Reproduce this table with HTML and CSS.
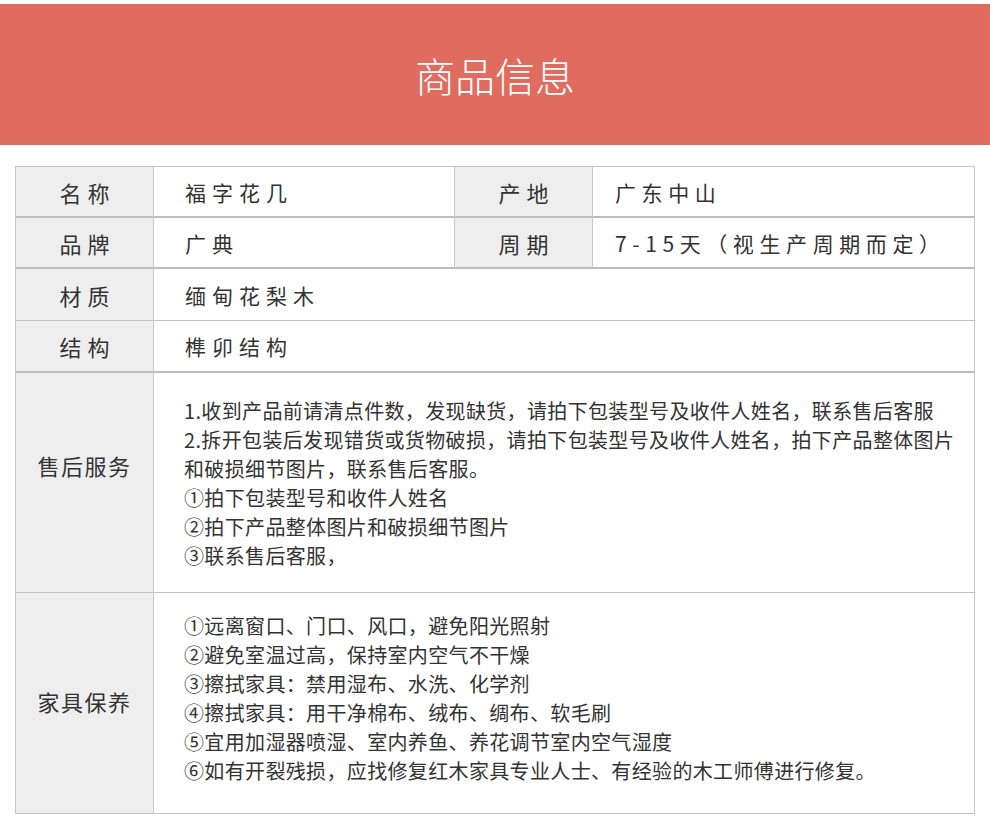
FILE: index.html
```html
<!DOCTYPE html>
<html lang="zh-CN">
<head>
<meta charset="utf-8">
<title>商品信息</title>
<link rel="stylesheet" href="styles.css">
</head>
<body>
<header class="banner"><h1 class="banner-title">商品信息</h1></header>
<section class="info">
  <div class="cell label short thick">名称</div>
  <div class="cell value short thick">福字花几</div>
  <div class="cell label short thick">产地</div>
  <div class="cell value value-right short thick">广东中山</div>

  <div class="cell label short thick">品牌</div>
  <div class="cell value short thick">广典</div>
  <div class="cell label short thick">周期</div>
  <div class="cell value value-right short thick">7-15天（视生产周期而定）</div>

  <div class="cell label short">材质</div>
  <div class="cell value span short">缅甸花梨木</div>

  <div class="cell label short thick">结构</div>
  <div class="cell value span short thick">榫卯结构</div>

  <div class="cell label long raised">售后服务</div>
  <div class="cell text span">
    <div class="lines">
      <p>1.收到产品前请清点件数，发现缺货，请拍下包装型号及收件人姓名，联系售后客服</p>
      <p>2.拆开包装后发现错货或货物破损，请拍下包装型号及收件人姓名，拍下产品整体图片<br>和破损细节图片，联系售后客服。</p>
      <p>①拍下包装型号和收件人姓名</p>
      <p>②拍下产品整体图片和破损细节图片</p>
      <p>③联系售后客服，</p>
    </div>
  </div>

  <div class="cell label long lifted">家具保养</div>
  <div class="cell text span text-lifted">
    <div class="lines">
      <p>①远离窗口、门口、风口，避免阳光照射</p>
      <p>②避免室温过高，保持室内空气不干燥</p>
      <p>③擦拭家具：禁用湿布、水洗、化学剂</p>
      <p>④擦拭家具：用干净棉布、绒布、绸布、软毛刷</p>
      <p>⑤宜用加湿器喷湿、室内养鱼、养花调节室内空气湿度</p>
      <p>⑥如有开裂残损，应找修复红木家具专业人士、有经验的木工师傅进行修复。</p>
    </div>
  </div>
</section>
</body>
</html>
```

FILE: styles.css
```css
html, body {
  margin: 0;
  padding: 0;
  background: #ffffff;
}

body {
  font-family: "Noto Sans CJK SC", "Noto Sans", sans-serif;
  color: #333333;
}

.banner {
  margin-top: 4px;
  height: 141px;
  background: #e06b5f;
  display: flex;
  align-items: center;
  justify-content: center;
}

.banner-title {
  margin: 0;
  font-size: 40px;
  font-weight: 300;
  color: #ffffff;
  line-height: 1;
}

.info {
  margin: 21px 0 0 15px;
  width: 960px;
  box-sizing: border-box;
  display: grid;
  grid-template-columns: 138px 301px 138px 1fr;
  grid-template-rows: 51px 51px 52px 52px 220px 221px;
  border-left: 1px solid #c6c6c6;
  border-top: 1px solid #c6c6c6;
}

.cell {
  box-sizing: border-box;
  border-right: 1px solid #c8c8c8;
  border-bottom: 1px solid #c2c2c2;
  display: flex;
  align-items: center;
}

.cell.thick {
  border-bottom: 2px solid #bdbdbd;
}

.span {
  grid-column: 2 / 5;
}

.label {
  background: #efeeef;
  justify-content: center;
  color: #333333;
}

.label.short {
  font-size: 22px;
  letter-spacing: 6px;
  text-indent: 6px;
}

.label.long {
  font-size: 22px;
  letter-spacing: 1.5px;
}

.label.raised {
  padding-bottom: 36px;
}

.label.lifted {
  padding-bottom: 4px;
}

.value {
  font-size: 21px;
  letter-spacing: 6px;
  padding-left: 31px;
  color: #333333;
}

.value-right {
  padding-left: 22px;
  letter-spacing: 5.6px;
}

.text {
  padding: 0 6px 0 30px;
  font-size: 20px;
  line-height: 29px;
  letter-spacing: 0.35px;
  color: #333333;
}

.text-lifted {
  padding-bottom: 10px;
}

.lines p {
  margin: 0;
  white-space: nowrap;
}
```
